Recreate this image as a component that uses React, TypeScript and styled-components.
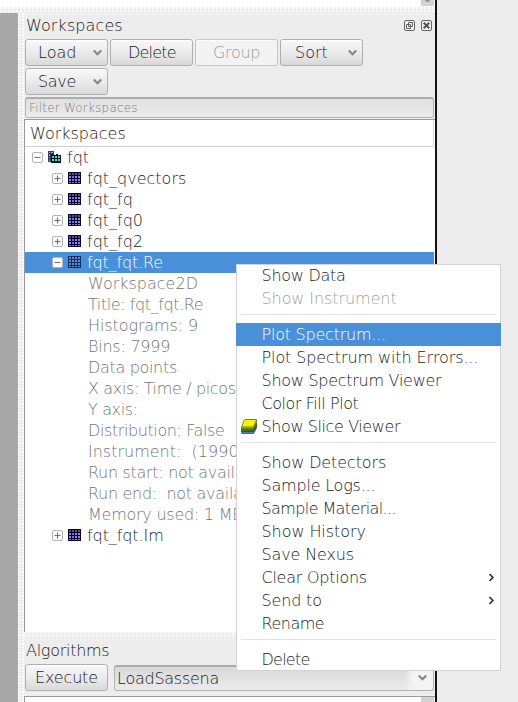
import React from "react";
import styled, { createGlobalStyle, css } from "styled-components";

const Global = createGlobalStyle`
  body { margin: 0; background: #ededed; overflow: hidden; }
  * { box-sizing: border-box; }
`;

const texture = css`
  background-color: #eeeeee;
  background-image: radial-gradient(circle at 1px 1px, #f9f9f9 0.8px, transparent 1.2px);
  background-size: 4px 3px;
`;

const Page = styled.div`
  position: relative;
  width: 518px;
  height: 702px;
  overflow: hidden;
  background: #ededed;
  color: #171c1e;
  font: 200 16px/21px "DejaVu Sans Light", "DejaVu Sans", sans-serif;
  white-space: pre;
`;
const Window = styled.div`
  width: 437px;
  height: 702px;
  border-right: 2px solid #141414;
  display: flex;
  flex-direction: column;
`;
const TopStrip = styled.div`
  height: 7px;
  flex: none;
  background: #fff;
  display: flex;
  justify-content: flex-end;
  padding-right: 1px;
`;
const ScrollStub = styled.div`
  width: 13px;
  height: 6px;
  background: #d3d3d3;
  display: flex;
  justify-content: center;
`;
const HSplitter = styled.div`
  height: 6px;
  flex: none;
  ${texture}
`;
const Body = styled.div`
  flex: 1;
  min-height: 0;
  display: flex;
`;
const GreyArea = styled.div`
  width: 18px;
  background: #a8a8a8;
`;
const VSplitter = styled.div`
  width: 6px;
  ${texture}
`;
const Dock = styled.div`
  width: 411px;
  display: flex;
  flex-direction: column;
`;
const DockTitle = styled.div<{ $drop?: number }>`
  height: 26px;
  flex: none;
  padding: 0 3px ${(p) => 2 - (p.$drop ?? 0)}px 2px;
  display: flex;
  align-items: center;
`;
const TitleButtons = styled.div`
  margin-left: auto;
  display: flex;
  gap: 6px;
`;
const Txt = styled.span<{ $ls?: number }>`
  letter-spacing: ${(p) => p.$ls ?? 0}px;
`;
const Toolbar = styled.div`
  flex: none;
  display: flex;
  flex-wrap: wrap;
  gap: 2px;
  padding: 0 1px;
`;
const Button = styled.div<{ $disabled?: boolean; $pad?: number }>`
  width: 83px;
  height: 27px;
  flex: none;
  border: 1px solid ${(p) => (p.$disabled ? "#c6c6c6" : "#b0b0b0")};
  border-radius: 3px;
  background: ${(p) => (p.$disabled ? "#f3f3f3" : "linear-gradient(#f8f8f8, #e9e9e9 55%, #d9d9d9)")};
  box-shadow: inset 0 1px #fff;
  color: ${(p) => (p.$disabled ? "#9b9d9d" : "#171c1e")};
  display: flex;
  align-items: center;
  justify-content: space-between;
  padding: 0 4px 0 ${(p) => p.$pad ?? 12}px;
`;
const Field = styled.div`
  height: 21px;
  flex: none;
  margin: 2px 1px 1px;
  border: 1px solid #b5b5b5;
  border-top: 2px solid #adadad;
  border-radius: 3px;
  background: linear-gradient(#e0e0e0, #ebebeb);
  color: #7b7e7e;
  font-size: 12px;
  letter-spacing: 0.2px;
  line-height: 18px;
  padding-left: 3px;
`;
const Tree = styled.div`
  height: 513px;
  flex: none;
  border-top: 1px solid #9a9a9a;
  border-left: 1px solid #9a9a9a;
  background: #fff;
  overflow: hidden;
`;
const TreeHeader = styled.div`
  height: 27px;
  width: 409px;
  padding: 3px 0 0 5px;
  border-bottom: 1px solid #cfcfcf;
  border-right: 1px solid #dadada;
`;
const Row = styled.div<{ $indent: number; $selected?: boolean; $muted?: boolean }>`
  height: 21px;
  width: 409px;
  display: flex;
  align-items: center;
  padding-left: ${(p) => p.$indent}px;
  color: ${(p) => (p.$selected ? "#fff" : p.$muted ? "#737676" : "#171c1e")};
  background: ${(p) => (p.$selected ? "#4a90d9" : "transparent")};
  & > svg { flex: none; }
`;
const RowIcon = styled.svg`
  margin: 0 6px 0 5px;
`;
const AlgRow = styled.div`
  flex: none;
  display: flex;
  padding: 0 1px;
  gap: 6px;
`;
const Combo = styled.div`
  width: 320px;
  height: 26px;
  margin-top: 1px;
  border: 1px solid #b3b3b3;
  border-top: 2px solid #ababab;
  border-radius: 3px;
  background: linear-gradient(90deg, transparent 290px, #f4f4f4 298px), linear-gradient(#d9d9d9, #ebebeb);
  display: flex;
  align-items: center;
  justify-content: space-between;
  padding: 0 5px 1px 2px;
`;
const BottomList = styled.div`
  flex: 1;
  margin-top: 5px;
  border-top: 1px solid #9a9a9a;
  border-left: 1px solid #9a9a9a;
  background: #fff;
  display: flex;
  justify-content: flex-end;
  padding-right: 1px;
`;
const Menu = styled.div`
  position: absolute;
  left: 236px;
  top: 264px;
  width: 265px;
  height: 407px;
  background: #fff;
  box-shadow: inset 0 0 0 1px #d3d3d3, inset 0 2px #fff;
`;
const MenuItem = styled.div<{ $active?: boolean; $disabled?: boolean }>`
  height: 23px;
  display: grid;
  grid-template-columns: 20.5px 1fr 7px;
  align-items: center;
  padding: 0 6px 0 5px;
  color: ${(p) => (p.$active ? "#fff" : p.$disabled ? "#a0a3a3" : "#171c1e")};
  background: ${(p) => (p.$active ? "#4a90d9" : "transparent")};
  & > svg { align-self: center; margin-bottom: 1px; }
`;
const MenuIcon = styled.span`
  height: 15px;
  display: flex;
`;
const Separator = styled.div`
  height: 13px;
  margin: 0 5px;
  padding-top: 4px;
  &::before {
    content: "";
    display: block;
    height: 1px;
    background: #e2e2e2;
  }
`;

const Chevron = () => (
  <svg width="11" height="8" viewBox="0 0 11 8">
    <path d="M1.8 1.6L5.5 5.3L9.2 1.6" fill="none" stroke="#858585" strokeWidth="2.1" />
  </svg>
);

const Expander = ({ open }: { open?: boolean }) => (
  <svg width="11" height="11" viewBox="0 0 11 11">
    <rect x=".5" y=".5" width="10" height="10" rx="1.5" fill="#fdfdfd" stroke="#b4b4b4" />
    <path d={open ? "M2.5 5.5H8.5" : "M2.5 5.5H8.5M5.5 2.5V8.5"} stroke="#6f6f6f" />
  </svg>
);

const GridIcon = ({ selected }: { selected?: boolean }) => (
  <RowIcon width="13" height="13" viewBox="0 0 13 13" shapeRendering="crispEdges">
    <rect width="13" height="12" fill={selected ? "#162f62" : "#080433"} />
    {[1, 4, 7, 10].map((y) =>
      [1, 4, 7, 10].map((x) => (
        <rect key={x + "-" + y} x={x} y={y} width="2" height={y === 10 ? 1 : 2}
          fill={selected ? "#6287c4" : y === 1 ? "#555478" : x === 4 && y > 3 ? "#7169ee" : "#8d88cf"} />
      ))
    )}
  </RowIcon>
);

const GroupIcon = () => (
  <RowIcon width="13" height="13" viewBox="0 0 13 13" shapeRendering="crispEdges">
    <path d="M0 0H6V4H8V3H10V4H13V12H3V11H0Z" fill="#06151d" />
    <path d="M0 0H6V3H3V11H0Z" fill="#39435f" />
    <path d="M1 1H2V2H1ZM3 1H5V2H3Z" fill="#9a9bc0" />
    <path d="M1 3H2V5H1ZM1 6H2V7H1ZM1 9H2V10H1Z" fill="#55b09a" />
    {[5, 8].map((y) => [4, 7, 10].map((x) => (
      <rect key={x + "-" + y} x={x} y={y} width="2" height="2" fill="#38d9dc" />
    )))}
  </RowIcon>
);

const SliceIcon = () => (
  <svg width="16" height="15" viewBox="0 0 16 15">
    <path d="M.8 11L12.5 11.5L15.3 6.5V9.5L12.6 14.4H.8Z" fill="#5b83b6" stroke="#1c477c" strokeWidth=".8" />
    <path d="M.7 9L12 9.5L15.4 4V7.2L12.5 12.4H.8Z" fill="#397a34" stroke="#164817" strokeWidth=".8" />
    <path d="M.5 8L3.3 1.2Q3.6.5 4.4.5H15.5V3.6L12.2 9.8H.5Z" fill="#a4a300" stroke="#6b6e0c" strokeWidth=".8" />
    <path d="M1.2 7.2L3.9 1.1H15L11.8 7.2Z" fill="#f4f500" />
  </svg>
);

const MenuArrow = () => (
  <svg width="7" height="9" viewBox="0 0 7 9">
    <path d="M1.5 1L4.9 4.5L1.5 8" fill="none" stroke="#2e3436" strokeWidth="1.7" />
  </svg>
);

const FloatIcon = () => (
  <svg width="11" height="11" viewBox="0 0 11 11">
    <rect x=".5" y=".5" width="10" height="10" rx="1.5" fill="#f1f1f1" stroke="#666" />
    <path d="M4.5 2.5H8.5V6.5H4.5ZM2.5 4.5H6.5V8.5H2.5Z" fill="#f1f1f1" stroke="#666" />
  </svg>
);
const CloseIcon = () => (
  <svg width="11" height="11" viewBox="0 0 11 11">
    <rect x=".5" y=".5" width="10" height="10" rx="1.5" fill="#f1f1f1" stroke="#666" />
    <path d="M2.7 2.7L8.3 8.3M8.3 2.7L2.7 8.3" stroke="#555" strokeWidth="2" />
  </svg>
);

const details: [string, number][] = [
  ["Workspace2D", 0],
  ["Title: fqt_fqt.Re", -0.42],
  ["Histograms: 9", -0.1],
  ["Bins: 7999", -0.25],
  ["Data points", -0.32],
  ["X axis: Time / picosecond", -0.36],
  ["Y axis:", -0.35],
  ["Distribution: False", -0.4],
  ["Instrument:  (1990", 0],
  ["Run start: not available", -0.3],
  ["Run end:  not available", -0.3],
  ["Memory used: 1 MB", -0.25],
];

type Item = {
  text: string;
  ls: number;
  active?: boolean;
  disabled?: boolean;
  icon?: boolean;
  sub?: boolean;
} | null;
const menu: Item[] = [
  { text: "Show Data", ls: -0.27 },
  { text: "Show Instrument", ls: -0.08, disabled: true },
  null,
  { text: "Plot Spectrum...", ls: -0.23, active: true },
  { text: "Plot Spectrum with Errors...", ls: -0.1 },
  { text: "Show Spectrum Viewer", ls: -0.27 },
  { text: "Color Fill Plot", ls: -0.44 },
  { text: "Show Slice Viewer", ls: -0.4, icon: true },
  null,
  { text: "Show Detectors", ls: -0.12 },
  { text: "Sample Logs...", ls: -0.2 },
  { text: "Sample Material...", ls: -0.6 },
  { text: "Show History", ls: -0.07 },
  { text: "Save Nexus", ls: -0.13 },
  { text: "Clear Options", ls: -0.25, sub: true },
  { text: "Send to", ls: -0.17, sub: true },
  { text: "Rename", ls: -0.5 },
  null,
  { text: "Delete", ls: -0.75 },
];

export default function App() {
  return (
    <>
      <Global />
      <Page>
        <Window>
          <TopStrip>
            <ScrollStub>
              <svg width="7" height="3" viewBox="0 0 7 3"><path d="M1 0H6L4.5 2H2.5Z" fill="#909090" /></svg>
            </ScrollStub>
          </TopStrip>
          <HSplitter />
          <Body>
            <GreyArea />
            <VSplitter />
            <Dock>
              <DockTitle>
                <Txt $ls={0.1}>Workspaces</Txt>
                <TitleButtons><FloatIcon /><CloseIcon /></TitleButtons>
              </DockTitle>
              <Toolbar>
                <Button><Txt>Load</Txt><Chevron /></Button>
                <Button $pad={17}><Txt $ls={-0.8}>Delete</Txt></Button>
                <Button $disabled $pad={17}><Txt $ls={-0.3}>Group</Txt></Button>
                <Button $pad={14}><Txt>Sort</Txt><Chevron /></Button>
                <Button><Txt $ls={-0.3}>Save</Txt><Chevron /></Button>
              </Toolbar>
              <Field>Filter Workspaces</Field>
              <Tree>
                <TreeHeader><Txt>Workspaces</Txt></TreeHeader>
                <Row $indent={7}><Expander open /><GroupIcon /><Txt>fqt</Txt></Row>
                {["fqt_qvectors", "fqt_fq", "fqt_fq0", "fqt_fq2"].map((t) => (
                  <Row key={t} $indent={27}><Expander /><GridIcon /><Txt>{t}</Txt></Row>
                ))}
                <Row $indent={27} $selected><Expander open /><GridIcon selected /><Txt $ls={-0.15}>fqt_fqt.Re</Txt></Row>
                {details.map(([t, ls]) => <Row key={t} $indent={63} $muted><Txt $ls={ls}>{t}</Txt></Row>)}
                <Row $indent={27}><Expander /><GridIcon /><Txt $ls={-0.08}>fqt_fqt.Im</Txt></Row>
              </Tree>
              <HSplitter />
              <DockTitle><Txt $ls={-0.27}>Algorithms</Txt></DockTitle>
              <AlgRow>
                <Button $pad={9}><Txt $ls={-0.15}>Execute</Txt></Button>
                <Combo><Txt $ls={-0.25}>LoadSassena</Txt><Chevron /></Combo>
              </AlgRow>
              <BottomList><ScrollStub /></BottomList>
            </Dock>
          </Body>
        </Window>
        <Menu>
          {menu.map((m, i) =>
            m ? (
              <MenuItem key={i} $active={m.active} $disabled={m.disabled}>
                <MenuIcon>{m.icon && <SliceIcon />}</MenuIcon>
                <Txt $ls={m.ls}>{m.text}</Txt>
                {m.sub && <MenuArrow />}
              </MenuItem>
            ) : (
              <Separator key={i} />
            )
          )}
        </Menu>
      </Page>
    </>
  );
}
